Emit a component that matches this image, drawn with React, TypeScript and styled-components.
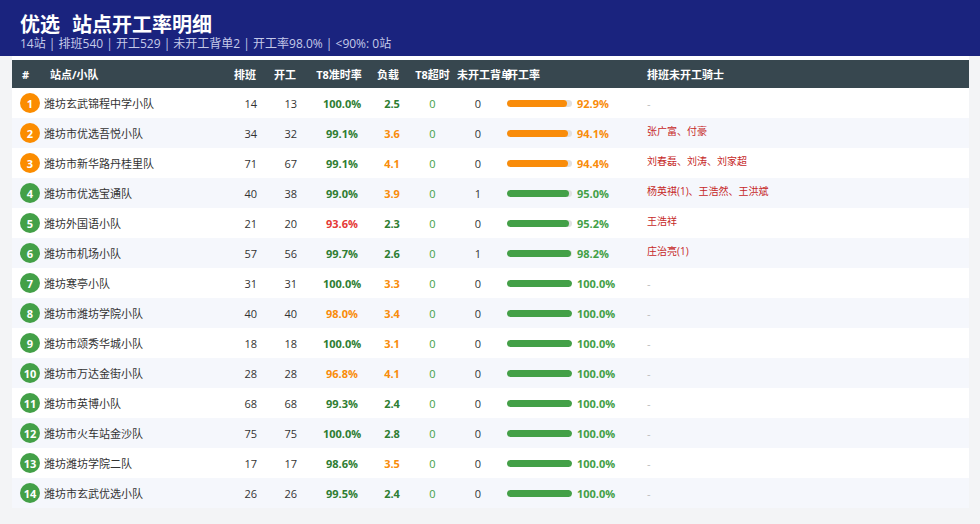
import React from "react";
import styled, { createGlobalStyle } from "styled-components";

const GlobalStyle = createGlobalStyle`
  body {
    margin: 0;
    background: #f3f4f6;
    font-family: "Open Sans", "Noto Sans CJK SC", sans-serif;
    color: #333;
  }
`;

const COLS = "30px 183px 34px 50px 66px 34px 47px 44px 140px 1fr";

const GREEN_DARK = "#2e7d32";
const GREEN = "#43a047";
const ORANGE = "#f98c0a";
const RED = "#e53935";

const Header = styled.header`
  height: 56px;
  box-sizing: border-box;
  padding: 15px 20px 0;
  background: #1a237e;
  color: #fff;
`;

const Title = styled.h1`
  margin: 0;
  font-size: 20px;
  line-height: 20px;
  font-weight: 700;
`;

const TitleTag = styled.span`
  margin-right: 12px;
`;

const Summary = styled.div`
  margin-top: 2px;
  font-size: 12px;
  line-height: 13px;
  color: #c5cae9;
`;

const Main = styled.main`
  padding: 0 11px 0 12px;
`;

const Card = styled.section`
  background: #fff;
  padding-top: 4px;
`;

const HeadRow = styled.div`
  display: grid;
  grid-template-columns: ${COLS};
  height: 28px;
  align-items: center;
  background: #37474f;
  color: #fff;
  font-size: 11px;
  font-weight: 700;
`;

const Row = styled.div<{ $alt: boolean }>`
  display: grid;
  grid-template-columns: ${COLS};
  height: 30px;
  align-items: center;
  background: ${({ $alt }) => ($alt ? "#f5f7fc" : "#fff")};
  font-size: 11px;
`;

const Cell = styled.div<{ $align?: string; $pl?: number; $pr?: number }>`
  text-align: ${({ $align }) => $align || "left"};
  padding-left: ${({ $pl }) => $pl || 0}px;
  padding-right: ${({ $pr }) => $pr || 0}px;
  white-space: nowrap;
  overflow: visible;
`;

const Value = styled(Cell)<{ $color?: string; $bold?: boolean }>`
  color: ${({ $color }) => $color || "#333"};
  font-weight: ${({ $bold }) => ($bold ? 700 : 400)};
`;

const Badge = styled.span<{ $top: boolean }>`
  display: flex;
  align-items: center;
  justify-content: center;
  width: 20px;
  height: 20px;
  margin-left: 8px;
  border-radius: 50%;
  background: ${({ $top }) => ($top ? "#fb8c00" : "#43a047")};
  color: #fff;
  font-size: 11px;
  font-weight: 700;
`;

const RateCell = styled.div`
  display: flex;
  align-items: center;
  padding-left: 7px;
`;

const Track = styled.div`
  width: 65px;
  height: 7px;
  border-radius: 4px;
  background: #e0e0e0;
  overflow: hidden;
`;

const Fill = styled.div<{ $color: string }>`
  height: 100%;
  border-radius: 4px;
  background: ${({ $color }) => $color};
`;

const RateText = styled.span<{ $color: string }>`
  margin-left: 5px;
  color: ${({ $color }) => $color};
  font-weight: 700;
  font-size: 11px;
`;

const Riders = styled.div<{ $empty: boolean }>`
  padding-left: 7px;
  padding-bottom: ${({ $empty }) => ($empty ? 0 : 5)}px;
  font-size: ${({ $empty }) => ($empty ? 11 : 10)}px;
  color: ${({ $empty }) => ($empty ? "#bbb" : "#c62828")};
  white-space: nowrap;
`;

interface Station {
  name: string;
  shifts: number;
  started: number;
  onTime: number;
  load: number;
  late: number;
  missing: number;
  rate: number;
  riders: string;
}

const stations: Station[] = [
  { name: "潍坊玄武锦程中学小队", shifts: 14, started: 13, onTime: 100.0, load: 2.5, late: 0, missing: 0, rate: 92.9, riders: "-" },
  { name: "潍坊市优选吾悦小队", shifts: 34, started: 32, onTime: 99.1, load: 3.6, late: 0, missing: 0, rate: 94.1, riders: "张广富、付豪" },
  { name: "潍坊市新华路丹桂里队", shifts: 71, started: 67, onTime: 99.1, load: 4.1, late: 0, missing: 0, rate: 94.4, riders: "刘春磊、刘涛、刘家超" },
  { name: "潍坊市优选宝通队", shifts: 40, started: 38, onTime: 99.0, load: 3.9, late: 0, missing: 1, rate: 95.0, riders: "杨英祺(1)、王浩然、王洪斌" },
  { name: "潍坊外国语小队", shifts: 21, started: 20, onTime: 93.6, load: 2.3, late: 0, missing: 0, rate: 95.2, riders: "王浩祥" },
  { name: "潍坊市机场小队", shifts: 57, started: 56, onTime: 99.7, load: 2.6, late: 0, missing: 1, rate: 98.2, riders: "庄治亮(1)" },
  { name: "潍坊寒亭小队", shifts: 31, started: 31, onTime: 100.0, load: 3.3, late: 0, missing: 0, rate: 100.0, riders: "-" },
  { name: "潍坊市潍坊学院小队", shifts: 40, started: 40, onTime: 98.0, load: 3.4, late: 0, missing: 0, rate: 100.0, riders: "-" },
  { name: "潍坊市颂秀华城小队", shifts: 18, started: 18, onTime: 100.0, load: 3.1, late: 0, missing: 0, rate: 100.0, riders: "-" },
  { name: "潍坊市万达金街小队", shifts: 28, started: 28, onTime: 96.8, load: 4.1, late: 0, missing: 0, rate: 100.0, riders: "-" },
  { name: "潍坊市英博小队", shifts: 68, started: 68, onTime: 99.3, load: 2.4, late: 0, missing: 0, rate: 100.0, riders: "-" },
  { name: "潍坊市火车站金沙队", shifts: 75, started: 75, onTime: 100.0, load: 2.8, late: 0, missing: 0, rate: 100.0, riders: "-" },
  { name: "潍坊潍坊学院二队", shifts: 17, started: 17, onTime: 98.6, load: 3.5, late: 0, missing: 0, rate: 100.0, riders: "-" },
  { name: "潍坊市玄武优选小队", shifts: 26, started: 26, onTime: 99.5, load: 2.4, late: 0, missing: 0, rate: 100.0, riders: "-" },
];

const onTimeColor = (v: number) => (v >= 98.5 ? GREEN_DARK : v >= 95 ? ORANGE : RED);
const loadColor = (v: number) => (v < 3 ? GREEN_DARK : ORANGE);
const rateColor = (v: number) => (v >= 95 ? GREEN : ORANGE);

const App = () => {
  return (
    <>
      <GlobalStyle />
      <Header>
        <Title>
          <TitleTag>优选</TitleTag>站点开工率明细
        </Title>
        <Summary>14站 | 排班540 | 开工529 | 未开工背单2 | 开工率98.0% | &lt;90%: 0站</Summary>
      </Header>
      <Main>
        <Card>
          <HeadRow>
            <Cell $pl={10}>#</Cell>
            <Cell $pl={8}>站点/小队</Cell>
            <Cell $align="right" $pr={3}>排班</Cell>
            <Cell $align="right" $pr={13}>开工</Cell>
            <Cell $align="center" $pr={6}>T8准时率</Cell>
            <Cell $align="center" $pr={8}>负载</Cell>
            <Cell $align="center">T8超时</Cell>
            <Cell $pl={1}>未开工背单</Cell>
            <Cell $pl={7}>开工率</Cell>
            <Cell $pl={7}>排班未开工骑士</Cell>
          </HeadRow>
          {stations.map((s, i) => (
            <Row key={s.name} $alt={i % 2 === 1}>
              <Badge $top={i < 3}>{i + 1}</Badge>
              <Cell $pl={2}>{s.name}</Cell>
              <Value $align="right" $pr={2}>{s.shifts}</Value>
              <Value $align="right" $pr={12}>{s.started}</Value>
              <Value $align="center" $color={onTimeColor(s.onTime)} $bold>
                {s.onTime.toFixed(1)}%
              </Value>
              <Value $align="center" $color={loadColor(s.load)} $bold>
                {s.load.toFixed(1)}
              </Value>
              <Value $align="center" $color={GREEN}>{s.late}</Value>
              <Value $align="center">{s.missing}</Value>
              <RateCell>
                <Track>
                  <Fill $color={rateColor(s.rate)} style={{ width: `${s.rate}%` }} />
                </Track>
                <RateText $color={rateColor(s.rate)}>{s.rate.toFixed(1)}%</RateText>
              </RateCell>
              <Riders $empty={s.riders === "-"}>{s.riders}</Riders>
            </Row>
          ))}
        </Card>
      </Main>
    </>
  );
};

export default App;
